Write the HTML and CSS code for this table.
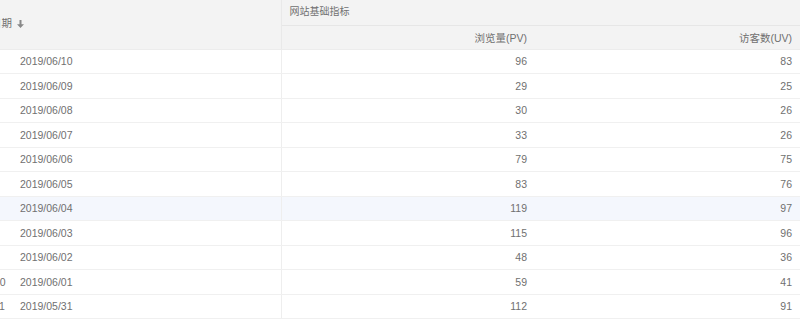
FILE: index.html
```html
<!DOCTYPE html>
<html lang="zh">
<head>
<meta charset="utf-8">
<title>网站基础指标</title>
<link rel="stylesheet" href="styles.css">
</head>
<body>
<div class="viewport">
  <table class="grid">
    <colgroup>
      <col class="c-idx">
      <col class="c-date">
      <col class="c-pv">
      <col class="c-uv">
    </colgroup>
    <thead>
      <tr class="h1">
        <th class="h-date" colspan="2" rowspan="2">日期<svg class="sort" width="7" height="8" viewBox="0 0 7 8"><path d="M2.5 0h2v4.2H7L3.5 8 0 4.2h2.5z" fill="#888888"/></svg></th>
        <th class="h-group" colspan="2">网站基础指标</th>
      </tr>
      <tr class="h2">
        <th class="num">浏览量(PV)</th>
        <th class="num last">访客数(UV)</th>
      </tr>
    </thead>
    <tbody>
      <tr><td class="idx">1</td><td class="date">2019/06/10</td><td class="num">96</td><td class="num last">83</td></tr>
      <tr><td class="idx">2</td><td class="date">2019/06/09</td><td class="num">29</td><td class="num last">25</td></tr>
      <tr><td class="idx">3</td><td class="date">2019/06/08</td><td class="num">30</td><td class="num last">26</td></tr>
      <tr><td class="idx">4</td><td class="date">2019/06/07</td><td class="num">33</td><td class="num last">26</td></tr>
      <tr><td class="idx">5</td><td class="date">2019/06/06</td><td class="num">79</td><td class="num last">75</td></tr>
      <tr><td class="idx">6</td><td class="date">2019/06/05</td><td class="num">83</td><td class="num last">76</td></tr>
      <tr class="hover"><td class="idx">7</td><td class="date">2019/06/04</td><td class="num">119</td><td class="num last">97</td></tr>
      <tr><td class="idx">8</td><td class="date">2019/06/03</td><td class="num">115</td><td class="num last">96</td></tr>
      <tr><td class="idx">9</td><td class="date">2019/06/02</td><td class="num">48</td><td class="num last">36</td></tr>
      <tr><td class="idx">10</td><td class="date">2019/06/01</td><td class="num">59</td><td class="num last">41</td></tr>
      <tr><td class="idx">11</td><td class="date">2019/05/31</td><td class="num">112</td><td class="num last">91</td></tr>
    </tbody>
  </table>
</div>
</body>
</html>
```

FILE: styles.css
```css
html, body {
  margin: 0;
  padding: 0;
  background: #ffffff;
}
body {
  font-family: "Liberation Sans", Arial, "Noto Sans CJK SC", sans-serif;
  font-size: 10.5px;
  color: #707070;
}
.viewport {
  width: 800px;
  height: 319px;
  overflow: hidden;
}
.grid {
  margin-left: -14px;
  width: 827px;
  border-collapse: collapse;
  table-layout: fixed;
}
.c-idx { width: 26px; }
.c-date { width: 269px; }
.c-pv { width: 254px; }
.c-uv { width: 278px; }
th {
  background: #f3f3f3;
  font-weight: normal;
  color: #707070;
  padding: 0 8px;
  white-space: nowrap;
}
.h1 { height: 25px; }
.h2 { height: 24px; }
.h-date {
  text-align: left;
  padding-left: 5px;
  border-right: 1px solid #e9e9e9;
  border-bottom: 1px solid #ececec;
  vertical-align: middle;
  padding-bottom: 4px;
}
.sort {
  margin-left: 5px;
  vertical-align: -1px;
}
.h-group {
  text-align: left;
  vertical-align: top;
  padding-top: 3px;
  font-size: 10px;
  border-bottom: 1px solid #e6e6e6;
}
.h2 th {
  border-bottom: 1px solid #ececec;
}
tbody tr {
  height: 24.5px;
}
td {
  padding: 0 8px;
  border-bottom: 1px solid #f0f0f0;
  white-space: nowrap;
  color: #707070;
}
td.idx {
  padding-left: 8px;
  padding-right: 0;
  text-align: left;
}
td.date {
  border-right: 1px solid #eeeeee;
}
.num {
  text-align: right;
}
.last {
  padding-right: 21px;
}
tr.hover td {
  background: #f4f7fd;
}
```
